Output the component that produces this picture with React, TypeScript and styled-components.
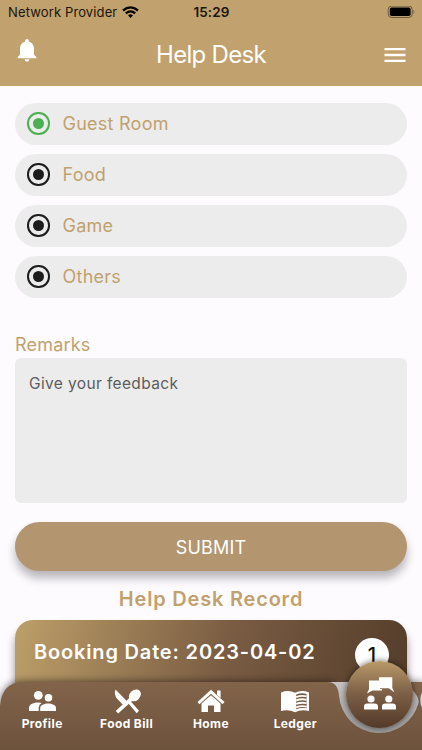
import React from "react";
import styled, { createGlobalStyle } from "styled-components";
import { MdNotifications, MdMenu } from "react-icons/md";

const GlobalStyle = createGlobalStyle`
  * { box-sizing: border-box; }
  html, body { margin: 0; background: #fefbff; overflow: hidden; }
  body { font-family: Inter, "Liberation Sans", sans-serif; }
  button, textarea { font-family: inherit; border: 0; padding: 0; }
`;

const Screen = styled.div`
  position: relative;
  width: 422px;
  height: 750px;
  overflow: hidden;
  display: flex;
  flex-direction: column;
  background: #fefbff;
`;

const Header = styled.header`
  flex: none;
  height: 85.5px;
  background: #c1a16d;
`;

const StatusBar = styled.div`
  height: 24px;
  display: grid;
  grid-template-columns: 1fr auto 1fr;
  align-items: center;
  padding: 0 7px 0 8px;
  font-size: 13px;
  color: #1c150b;
`;

const Carrier = styled.div`
  display: flex;
  align-items: center;
  gap: 5px;
  letter-spacing: 0.13px;
  white-space: nowrap;
`;

const Clock = styled.div`
  font-weight: 600;
  font-size: 13.5px;
  letter-spacing: 0.1px;
`;

const BatterySlot = styled.div`
  display: flex;
  justify-content: flex-end;
`;

const TitleBar = styled.div`
  height: 61px;
  display: grid;
  grid-template-columns: 1fr auto 1fr;
  align-items: center;
  padding: 0 13px 0 13px;
  color: #fff;
`;

const Title = styled.h1`
  margin: 0;
  font-size: 24px;
  line-height: 30px;
  font-weight: 400;
  letter-spacing: -0.7px;
`;

const IconButton = styled.button<{ $end?: boolean }>`
  display: flex;
  width: 28px;
  height: 28px;
  color: #fff;
  background: none;
  justify-self: ${(p) => (p.$end ? "end" : "start")};
  margin-top: ${(p) => (p.$end ? "0" : "-10px")};
`;

const Content = styled.main`
  flex: 1;
  display: flex;
  flex-direction: column;
  padding: 17px 15px 0;
`;

const Options = styled.div`
  display: flex;
  flex-direction: column;
  gap: 9px;
`;

const Option = styled.label`
  height: 42px;
  display: flex;
  align-items: center;
  gap: 13px;
  padding-left: 12px;
  border-radius: 21px;
  background: #ececec;
  color: #c1a16d;
  font-size: 18px;
  letter-spacing: 0.25px;
`;

const Radio = styled.span<{ $active?: boolean }>`
  width: 22.5px;
  height: 22.5px;
  display: grid;
  place-items: center;
  border-radius: 50%;
  color: ${(p) => (p.$active ? "#4caf50" : "#1c1c1c")};
  border: 2px solid currentColor;
  &::after {
    content: "";
    width: 11.5px;
    height: 11.5px;
    border-radius: 50%;
    background: currentColor;
  }
`;

const FieldLabel = styled.label`
  margin-top: 34px;
  height: 26px;
  line-height: 26px;
  font-size: 18px;
  letter-spacing: 0.2px;
  color: #c1a16d;
`;

const Feedback = styled.textarea`
  height: 145px;
  padding: 15px 14px;
  border-radius: 6px;
  background: #ececec;
  resize: none;
  font-size: 15.5px;
  line-height: 21px;
  letter-spacing: 0.37px;
  outline: none;
  &::placeholder { color: #5c5c5c; opacity: 1; }
`;

const Submit = styled.button`
  margin-top: 19px;
  height: 49px;
  padding-top: 2px;
  flex: none;
  border-radius: 25px;
  background: #b39570;
  color: #fff;
  font-size: 18px;
  letter-spacing: 0.2px;
  box-shadow: 0 7px 10px rgba(40, 36, 42, 0.33);
`;

const RecordTitle = styled.h2`
  margin: 15px 0 8px;
  height: 26px;
  line-height: 26px;
  text-align: center;
  font-size: 20px;
  font-weight: 600;
  letter-spacing: 0.8px;
  color: #c1a16d;
`;

const RecordCard = styled.section`
  height: 120px;
  flex: none;
  display: flex;
  align-items: flex-start;
  justify-content: space-between;
  padding: 17px 18px 0 19px;
  border-radius: 18px;
  background: linear-gradient(103deg, #bd9f69 0%, #7a5c43 52%, #513b28 100%);
  box-shadow: 0 8px 8px rgba(30, 20, 20, 0.45);
  color: #fff;
`;

const BookingDate = styled.div`
  font-size: 20px;
  line-height: 30px;
  font-weight: 600;
  letter-spacing: 0.83px;
  white-space: nowrap;
`;

const Count = styled.div`
  width: 34px;
  height: 34px;
  margin-top: 1px;
  display: grid;
  place-items: center;
  border-radius: 50%;
  background: #fff;
  color: #111;
  font-size: 20px;
  font-weight: 500;
`;

const Navigation = styled.nav`
  position: absolute;
  left: 0;
  right: 0;
  bottom: 0;
  height: 68px;
`;

const NavShape = styled.svg`
  position: absolute;
  left: 0;
  bottom: 0;
  width: 422px;
  height: 88px;
`;

const NavItems = styled.div`
  position: relative;
  height: 68px;
  display: grid;
  grid-template-columns: repeat(5, 1fr);
`;

const NavItem = styled.a`
  display: flex;
  flex-direction: column;
  align-items: center;
  padding-top: 4px;
  color: #fff;
  font-size: 12px;
  line-height: 15px;
  font-weight: 700;
  letter-spacing: 0.4px;
  white-space: nowrap;
  svg { width: 30px; height: 30px; flex: none; }
`;

const HelpButton = styled.button`
  position: absolute;
  left: 346px;
  top: -21px;
  width: 67px;
  height: 67px;
  display: grid;
  place-items: center;
  border-radius: 50%;
  background: linear-gradient(#b99a69, #7d6047 48%, #533a28);
  box-shadow: 0 0 6px rgba(0, 0, 0, 0.6);
`;

const WifiIcon = () => (
  <svg width="17" height="13" viewBox="0 0 17 13" fill="none" stroke="#000" strokeWidth="2.3">
    <path d="M1 4.5Q8.5-1.7 16 4.5M3.8 7.3Q8.5 3.4 13.2 7.3" />
    <path d="M6 9.3Q8.5 7.4 11 9.3L8.5 12Z" fill="#000" stroke="none" />
  </svg>
);

const BatteryIcon = () => (
  <svg width="28" height="13" viewBox="0 0 28 13">
    <rect x="1.2" y=".5" width="24" height="11.4" rx="3.4" fill="none" stroke="#6d5b40" transform="translate(0 -.4)" />
    <rect x="2.8" y="1.6" width="20.8" height="8.4" rx="1.8" fill="#000" />
    <path d="M26.500 3.800Q28.200 5.900 26.500 8Z" fill="#6d5b40" />
  </svg>
);

const ProfileIcon = () => (
  <svg viewBox="0 0 30 30" fill="#fff">
    <circle cx="11.3" cy="9.300" r="4.400" />
    <circle cx="21.500" cy="11.800" r="3.800" />
    <path d="M2 25v-3.400C2 18.300 7 16.500 11.3 16.500q1.800 0 3.300.4-2.900 1.800-2.900 4.700V25Z" />
    <path d="M13.200 25v-3.200c0-2.800 4.200-4.400 8-4.400S29 19 29 21.800V25Z" />
  </svg>
);

const DiningIcon = () => (
  <svg viewBox="0 0 30 30" fill="#fff">
    <path d="M3.500 3.500 15.900 16.300 12 19.800 5.300 13Q1.500 8.500 3.500 3.500Z" />
    <path d="m15 15.700 2.300-2L27 24.800 24.700 27.200Z" />
    <path d="m3.800 25 13.300-12.700q-1-3.300 1.800-6.300c2.700-2.900 6.500-3.400 8.700-1.200s1.500 5.700-1.400 8.600q-2.800 2.700-6.200 1.700L6.200 27.400Z" />
  </svg>
);

const HomeIcon = () => (
  <svg viewBox="0 0 30 30" fill="#fff">
    <path d="M15 3.700 28.500 16l-1.900 2.200L15 7.800 3.400 18.200 1.500 16Z" />
    <path d="M21 4.500h3.600V12L21 8.800ZM5.500 17.500 15 9.200l9.500 8.300V26H18v-6.500h-6V26H5.500Z" />
  </svg>
);

const LedgerIcon = () => (
  <svg viewBox="0 0 30 30">
    <path d="M1 6.500Q8.5 3.500 15 6.800q6.500-3.300 14-.3V25q-7.500-2-14 1.200Q8.500 23 1 25Z" fill="#fff" />
    <path d="M16.200 8.500q5-2 10.400-.6v14.400q-5.400-1-10.400.9Z" fill="#79593f" />
    <path d="M16.200 11.100q5-2 10.400-.7M16.200 14.500q5-2 10.400-.7M16.200 17.900q5-2 10.400-.7M16.200 21.300q5-2 10.400-.7" fill="none" stroke="#fff" strokeWidth="1.900" />
  </svg>
);

const HelpIcon = () => (
  <svg width="34" height="35" viewBox="0 0 34 35" fill="#fff">
    <path d="M16 .3H29.300v10.500l2 4.500-5.500-4H16Z" />
    <path d="M6 3.500H17v8.400h2v1.500H9.500L4 16.500l2-4.500Z" />
    <circle cx="8" cy="22" r="3.600" />
    <circle cx="25.8" cy="22" r="3.600" />
    <path d="M1 32.500v-2.800q0-3.200 3.300-3.200h7.200q3.500 0 3.500 3.200v2.800ZM19 32.500v-2.800q0-3.200 3.300-3.200h7.200q3.500 0 3.500 3.200v2.800Z" />
  </svg>
);

const bar = "M0 108V44Q2 20 23 20H328Q338 20 339 34A40.5 40.5 0 0 0 418.5 41Q420 35 411 27V20H422V108Z";

const choices = ["Guest Room", "Food", "Game", "Others"];

export default function App() {
  return (
    <>
      <GlobalStyle />
      <Screen>
        <Header>
          <StatusBar>
            <Carrier>Network Provider <WifiIcon /></Carrier>
            <Clock>15:29</Clock>
            <BatterySlot><BatteryIcon /></BatterySlot>
          </StatusBar>
          <TitleBar>
            <IconButton aria-label="Notifications"><MdNotifications size={28} /></IconButton>
            <Title>Help Desk</Title>
            <IconButton $end aria-label="Menu"><MdMenu size={28} /></IconButton>
          </TitleBar>
        </Header>
        <Content>
          <Options>
            {choices.map((name, i) => (
              <Option key={name}><Radio $active={i === 0} />{name}</Option>
            ))}
          </Options>
          <FieldLabel htmlFor="remarks">Remarks</FieldLabel>
          <Feedback id="remarks" placeholder="Give your feedback" />
          <Submit>SUBMIT</Submit>
          <RecordTitle>Help Desk Record</RecordTitle>
          <RecordCard>
            <BookingDate>Booking Date: 2023-04-02</BookingDate>
            <Count>1</Count>
          </RecordCard>
        </Content>
        <Navigation>
          <NavShape viewBox="0 0 422 88">
            <defs>
              <linearGradient id="bar" x1="0" y1="0" x2="0" y2="1">
                <stop offset="0" stopColor="#82644a" />
                <stop offset="1" stopColor="#674d39" />
              </linearGradient>
              <linearGradient id="well" x1="0" y1="0" x2="0" y2="1">
                <stop offset="0" stopColor="#c5c3c4" />
                <stop offset="1" stopColor="#949291" />
              </linearGradient>
              <filter id="shade" x="-10%" y="-30%" width="120%" height="160%">
                <feGaussianBlur stdDeviation="4" />
              </filter>
            </defs>
            <path d={bar} fill="#000" opacity=".6" filter="url(#shade)" />
            <path d="M326 20H422V80H330Z" fill="url(#well)" />
            <path d={bar} fill="url(#bar)" />
            <path d="M422 30Q418.5 38 422 46Z" fill="#d5d0d1" />
          </NavShape>
          <NavItems>
            <NavItem><ProfileIcon />Profile</NavItem>
            <NavItem><DiningIcon />Food Bill</NavItem>
            <NavItem><HomeIcon />Home</NavItem>
            <NavItem><LedgerIcon />Ledger</NavItem>
          </NavItems>
          <HelpButton aria-label="Help Desk"><HelpIcon /></HelpButton>
        </Navigation>
      </Screen>
    </>
  );
}
